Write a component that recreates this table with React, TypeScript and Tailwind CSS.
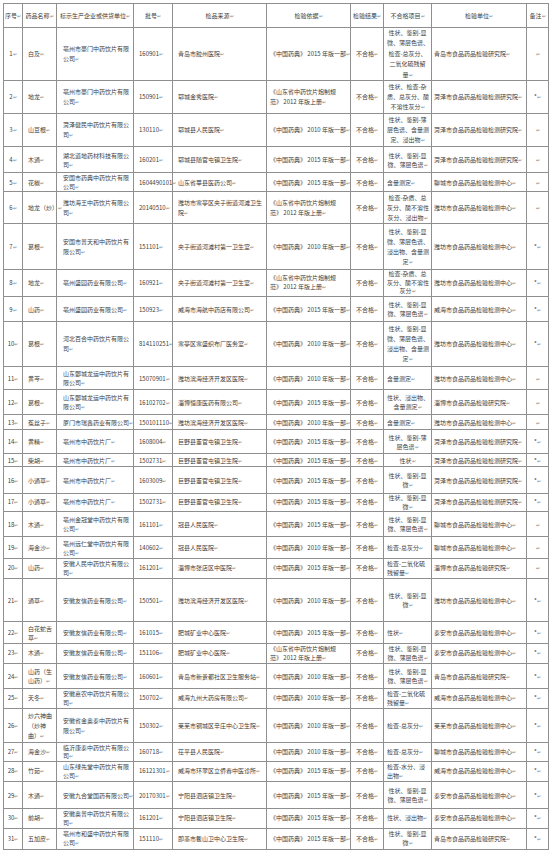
import React from "react";

const QD = "青岛市食品药品检验研究院";
const HZ = "菏泽市食品药品检验检测研究院";
const LC = "聊城市食品药品检验检测中心";
const WF = "潍坊市食品药品检验检测中心";
const WH = "威海市食品药品检验检测中心";
const ZB = "淄博市食品药品检验研究院";
const TA = "泰安市食品药品检验检测中心";
const LW = "莱芜市食品药品检验检测中心";

const BASIS: Record<string, string[]> = {
  "15": ["《中国药典》 2015 年版一部"],
  "10": ["《中国药典》 2010 年版一部"],
  "12": ["《山东省中药饮片炮制规", "范》 2012 年版上册"],
};

// no, name, firm, batch, source, basis, items, items align, unit, remark, row height, leading
type Row = [string, string, string, string, string, string, string, "c" | "l", string, string, string, string?];

const rows: Row[] = [
  ["1", "白及", "亳州市豪门中药饮片有限|公司", "160901", "青岛市胶州医院", "15", "性状、鉴别-显|微、薄层色谱、|检查-总灰分、|二氧化硫残留|量", "c", QD, "", "h-[53px]", "leading-[10.4px]"],
  ["2", "地龙", "亳州市豪门中药饮片有限|公司", "150901", "郓城金秀医院", "12", "性状、检查-杂|质、总灰分、酸|不溶性灰分", "c", HZ, "*", "h-[33px]", "leading-[10px]"],
  ["3", "山豆根", "菏泽健民中药饮片有限公|司", "130110", "郓城县人民医院", "10", "性状、鉴别-薄|层色谱、含量测|定、浸出物", "c", HZ, "", "h-[33px]", "leading-[10px]"],
  ["4", "木通", "湖北道地药材科技有限公|司", "160201", "郓城县随官屯镇卫生院", "15", "性状、鉴别-显|微、薄层色谱", "c", HZ, "", "h-[26px]"],
  ["5", "花椒", "安国市药典中药饮片有限|公司", "1604490101", "山东省莘县医药公司", "15", "含量测定", "l", LC, "", "h-[18px]"],
  ["6", "地龙（炒）", "潍坊海王中药饮片有限公|司", "20140510", "潍坊市寒亭区央子街道河滩卫生|院", "12", "检查-杂质、总|灰分、酸不溶性|灰分、浸出物", "c", WF, "", "h-[32px]", "leading-[10px]"],
  ["7", "葛根", "安国市普天和中药饮片有|限公司", "151101", "央子街道河滩村第一卫生室", "10", "性状、鉴别-显|微、薄层色谱、|浸出物、含量测|定", "c", WF, "*", "h-[46px]", "leading-[10px]"],
  ["8", "地龙", "亳州盛园药业有限公司", "160921", "央子街道河滩村第一卫生室", "12", "检查-杂质、总|灰分、酸不溶性|灰分", "c", WF, "*", "h-[27px]", "leading-[8.6px]"],
  ["9", "山药", "亳州盛园药业有限公司", "150923", "威海市海航中药店有限公司", "15", "性状、鉴别-显|微、薄层色谱", "c", WH, "*", "h-[25px]"],
  ["10", "葛根", "河北百合中药饮片有限公|司", "814110251", "寒亭区寒盛织布厂医务室", "10", "性状、鉴别-显|微、薄层色谱、|浸出物、含量测|定", "c", WF, "*", "h-[45px]", "leading-[10px]"],
  ["11", "黄芩", "山东鄄城龙运中药饮片有|限公司", "15070901", "潍坊滨海经济开发区医院", "10", "含量测定", "l", WF, "", "h-[23px]"],
  ["12", "葛根", "山东鄄城龙运中药饮片有|限公司", "16102702", "淄博恒康医药有限公司", "15", "性状、浸出物、|含量测定", "c", ZB, "", "h-[25px]"],
  ["13", "菟丝子", "厦门市瑞鑫药业有限公司", "150101110", "潍坊滨海经济开发区医院", "10", "含量测定", "l", WF, "", "h-[15px]"],
  ["14", "黄精", "亳州市中药饮片厂", "1608004", "巨野县董官屯镇卫生院", "15", "性状、鉴别-薄|层色谱", "c", HZ, "*", "h-[24px]"],
  ["15", "柴胡", "亳州市中药饮片厂", "1502731", "巨野县董官屯镇卫生院", "15", "性状", "c", HZ, "*", "h-[13px]"],
  ["16", "小通草", "亳州市中药饮片厂", "1603009", "巨野县董官屯镇卫生院", "15", "性状、鉴别-显|微", "c", HZ, "*", "h-[27px]"],
  ["17", "小通草", "亳州市中药饮片厂", "1502731", "巨野县董官屯镇卫生院", "15", "性状、鉴别-显|微", "c", HZ, "*", "h-[18px]", "leading-[8.4px]"],
  ["18", "木通", "亳州金冠堂中药饮片有限|公司", "161101", "冠县人民医院", "15", "性状、鉴别-显|微、薄层色谱", "c", LC, "", "h-[25px]"],
  ["19", "海金沙", "亳州远仁堂中药饮片有限|公司", "140602", "冠县人民医院", "10", "检查-总灰分", "l", LC, "", "h-[22px]"],
  ["20", "山药", "安徽人民中药饮片有限公|司", "161201", "淄博市张店区中医院", "15", "检查-二氧化硫|残留量", "l", ZB, "", "h-[20px]", "leading-[8.6px]"],
  ["21", "通草", "安徽友信药业有限公司", "150501", "潍坊滨海经济开发区医院", "10", "性状、鉴别-显|微", "c", WF, "*", "h-[43px]"],
  ["22", "白花蛇舌|草", "安徽友信药业有限公司", "161015", "肥城矿业中心医院", "15", "性状", "l", TA, "*", "h-[22px]"],
  ["23", "木通", "安徽友信药业有限公司", "151106", "肥城矿业中心医院", "12", "性状、鉴别-显|微、薄层色谱", "c", TA, "*", "h-[20px]", "leading-[8.6px]"],
  ["24", "山药（生|山药）", "安徽友信药业有限公司", "160601", "青岛市新贵都社区卫生服务站", "10", "性状、鉴别-显|微、薄层色谱", "c", QD, "*", "h-[25px]"],
  ["25", "天冬", "安徽嘉农中药饮片有限公|司", "150702", "威海九州大药房有限公司", "10", "检查-二氧化硫|残留量", "l", WH, "*", "h-[20px]", "leading-[8.6px]"],
  ["26", "炒六神曲|（炒神|曲）", "安徽省金奥泰中药饮片有|限公司", "150302", "莱芜市钢城区辛庄中心卫生院", "10", "检查-总灰分", "l", LW, "*", "h-[34px]", "leading-[10px]"],
  ["27", "海金沙", "临沂康泰中药饮片有限公|司", "160718", "茌平县人民医院", "10", "检查-总灰分", "l", LC, "*", "h-[19px]", "leading-[8.4px]"],
  ["28", "竹茹", "山东绿先堂中药饮片有限|公司", "16121301", "威海市环翠区立侨春中医诊所", "15", "检查-水分、浸|出物", "l", WH, "*", "h-[20px]", "leading-[8.6px]"],
  ["29", "木通", "安徽九合堂国药有限公司", "20170301", "宁阳县泗店镇卫生院", "15", "性状、鉴别-显|微、薄层色谱", "c", TA, "*", "h-[27px]"],
  ["30", "前胡", "安徽奥普中药饮片有限公|司", "161201", "宁阳县泗店镇卫生院", "15", "性状、浸出物", "l", TA, "*", "h-[20px]", "leading-[8.6px]"],
  ["31", "五加皮", "亳州市和盛中药饮片有限|公司", "151110", "即墨市鳌山卫中心卫生院", "15", "性状、鉴别-显|微", "c", QD, "*", "h-[21px]", "leading-[8.8px]"],
];

const headers = ["序号", "药品名称", "标示生产企业或供货单位", "批号", "检品来源", "检验依据", "检验结果", "不合格项目", "检验单位", "备注"];
const widths = ["w-[19px]", "w-[34px]", "w-[77px]", "w-[39px]", "w-[94px]", "w-[84px]", "w-[33px]", "w-[48px]", "w-[95px]", "w-[22px]"];

// each line is its own block; the Word paragraph mark sits after the last one
function Lines({ t }: { t: string[] }) {
  return (
    <>
      {t.map((line, i) => (
        <div key={i} className="whitespace-nowrap">
          {line}
          {i === t.length - 1 && <span className="text-[5px] text-[#8a8a8a]">↵</span>}
        </div>
      ))}
    </>
  );
}

const cell = "border border-[#8f8f8f] p-0 align-middle";

export default function App() {
  return (
    <div className="min-h-screen w-[550px] bg-white pl-[3px] pt-[3px] text-[#404040] font-['Noto_Sans_CJK_SC','Noto_Sans',sans-serif]">
      <table className="w-[545px] table-fixed border-collapse border border-[#6e6e6e] text-[6px] leading-[9px]">
        <colgroup>
          {widths.map((w, i) => (
            <col key={i} className={w} />
          ))}
        </colgroup>
        <thead>
          <tr className="h-[24px]">
            {headers.map((h, i) => (
              <th key={i} className={`${cell} text-center font-normal`}>
                <Lines t={[h]} />
              </th>
            ))}
          </tr>
        </thead>
        <tbody>
          {rows.map((r) => {
            const [no, name, firm, batch, src, basis, items, align, unit, remark, h, lh] = r;
            return (
              <tr key={no} className={`${h} ${lh ?? "leading-[9px]"}`}>
                <td className={`${cell} text-center`}><Lines t={[no]} /></td>
                <td className={`${cell} pl-[5px]`}><Lines t={name.split("|")} /></td>
                <td className={`${cell} pl-[6px]`}><Lines t={firm.split("|")} /></td>
                <td className={`${cell} pl-[5px]`}><Lines t={[batch]} /></td>
                <td className={`${cell} pl-[5px]`}><Lines t={src.split("|")} /></td>
                <td className={`${cell} pl-[3px]`}><Lines t={BASIS[basis]} /></td>
                <td className={`${cell} text-center`}><Lines t={["不合格"]} /></td>
                <td className={`${cell} px-[3px] ${align === "c" ? "text-center" : "text-left"}`}><Lines t={items.split("|")} /></td>
                <td className={`${cell} pl-[2px]`}><Lines t={[unit]} /></td>
                <td className={`${cell} text-center`}><Lines t={[remark]} /></td>
              </tr>
            );
          })}
        </tbody>
      </table>
    </div>
  );
}
